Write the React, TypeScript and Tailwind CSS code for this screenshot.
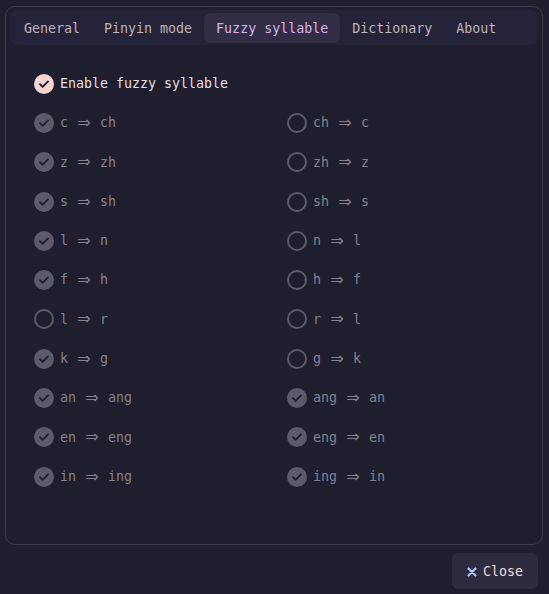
import React from "react";

type Pair = { from: string; to: string; on: boolean };

const rows: [Pair, Pair][] = [
  [{ from: "c", to: "ch", on: true }, { from: "ch", to: "c", on: false }],
  [{ from: "z", to: "zh", on: true }, { from: "zh", to: "z", on: false }],
  [{ from: "s", to: "sh", on: true }, { from: "sh", to: "s", on: false }],
  [{ from: "l", to: "n", on: true }, { from: "n", to: "l", on: false }],
  [{ from: "f", to: "h", on: true }, { from: "h", to: "f", on: false }],
  [{ from: "l", to: "r", on: false }, { from: "r", to: "l", on: false }],
  [{ from: "k", to: "g", on: true }, { from: "g", to: "k", on: false }],
  [{ from: "an", to: "ang", on: true }, { from: "ang", to: "an", on: true }],
  [{ from: "en", to: "eng", on: true }, { from: "eng", to: "en", on: true }],
  [{ from: "in", to: "ing", on: true }, { from: "ing", to: "in", on: true }],
];

const tabs = ["General", "Pinyin mode", "Fuzzy syllable", "Dictionary", "About"];

function Check({ on, active }: { on: boolean; active?: boolean }) {
  if (!on) {
    return <span className="w-[20px] h-[20px] rounded-full border-2 border-[#5d5b6b] shrink-0" />;
  }
  return (
    <span
      className={
        "w-[20px] h-[20px] rounded-full flex items-center justify-center shrink-0 " +
        (active ? "bg-[#f4d3d3]" : "bg-[#5d5b6b]")
      }
    >
      <svg width="12" height="12" viewBox="0 0 12 12" fill="none">
        <path d="M2 6.2l2.6 2.6L10 3.4" stroke="#1e1e2e" strokeWidth="1.9" strokeLinecap="round" strokeLinejoin="round" />
      </svg>
    </span>
  );
}

function Option({ p }: { p: Pair }) {
  return (
    <div className="flex items-center gap-[6px] h-[39.3px]">
      <Check on={p.on} />
      <span className="text-[#87818c] whitespace-pre flex items-center">
        {p.from + " "}
        <span
          className="inline-block w-[16px] text-center text-[16px]"
          style={{ fontFamily: '"DejaVu Sans", sans-serif' }}
        >
          ⇒
        </span>
        {" " + p.to}
      </span>
    </div>
  );
}

export default function App() {
  return (
    <div
      className="w-[549px] h-[594px] bg-[#1e1e2e] flex flex-col text-[13.3px] leading-none"
      style={{ fontFamily: '"DejaVu Sans Mono", "Liberation Mono", monospace' }}
    >
      {/* panel */}
      <div className="ml-[5px] mt-[6px] w-[538px] h-[539px] rounded-[10px] border border-[#3a394e] flex flex-col">
        <div className="mx-[4px] mt-[3px] h-[35px] rounded-[8px] bg-[#24233a] flex items-center px-[2px] pt-[1px]">
          {tabs.map((t) => (
            <div
              key={t}
              className={
                "h-[30px] px-[12px] flex items-center rounded-[6px] pt-[2px] " +
                (t === "Fuzzy syllable" ? "bg-[#302d45] text-[#d6b2ef]" : "text-[#bfb3bb]")
              }
            >
              {t}
            </div>
          ))}
        </div>

        <div className="pl-[28px] pt-[19px]">
          <div className="flex items-center gap-[6px] h-[39.3px]">
            <Check on active />
            <span className="text-[#e8dfe2]">Enable fuzzy syllable</span>
          </div>
          {rows.map(([a, b], i) => (
            <div key={i} className="grid grid-cols-[253px_1fr]">
              <Option p={a} />
              <Option p={b} />
            </div>
          ))}
        </div>
      </div>

      {/* footer */}
      <div className="flex justify-end pr-[11px] pt-[8px]">
        <button className="w-[86px] h-[36px] rounded-[6px] bg-[#2d2b3e] flex items-center justify-center gap-[6px] pt-[2px]">
          <svg width="10" height="10" viewBox="0 0 10 10">
            <path d="M1.5 1.5l7 7M8.5 1.5l-7 7" stroke="#b4befe" strokeWidth="2.2" strokeLinecap="round" />
          </svg>
          <span className="text-[#f2d9d9]">Close</span>
        </button>
      </div>
    </div>
  );
}
